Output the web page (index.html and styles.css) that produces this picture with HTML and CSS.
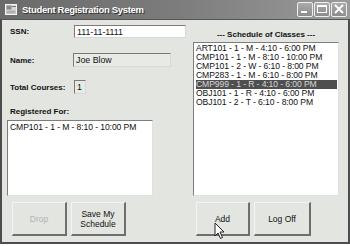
FILE: index.html
```html
<!DOCTYPE html>
<html>
<head>
<meta charset="utf-8">
<title>Student Registration System</title>
<link rel="stylesheet" href="styles.css">
</head>
<body>
<div class="window">
  <div class="titlebar">
    <svg class="appicon" width="12" height="11" viewBox="0 0 12 11">
      <rect x="0.5" y="0.5" width="11" height="10" fill="#d8d8d8" stroke="#f4f4f4"/>
      <rect x="1.5" y="1.5" width="5" height="4" fill="#8a8a8a"/>
      <rect x="7" y="2" width="4" height="1" fill="#777"/>
      <rect x="1.5" y="6.5" width="9" height="3" fill="#b0b0b0"/>
    </svg>
    <span class="title">Student Registration System</span>
    <div class="controls">
      <span class="ctl"><svg width="16" height="14" viewBox="0 0 16 14"><rect x="4" y="9" width="6" height="2" fill="#fff"/></svg></span>
      <span class="ctl"><svg width="16" height="14" viewBox="0 0 16 14"><rect x="3.5" y="3.5" width="9" height="7" fill="none" stroke="#fff"/><rect x="3.5" y="3" width="9" height="2" fill="#fff"/></svg></span>
      <span class="ctl"><svg width="16" height="14" viewBox="0 0 16 14"><path d="M4 3 L12 11 M12 3 L4 11" stroke="#fff" stroke-width="2"/></svg></span>
    </div>
  </div>

  <div class="client">
    <div class="col left">
      <div class="row ssn">
        <span class="lbl">SSN:</span>
        <span class="box wide">111-11-1111</span>
      </div>
      <div class="row name">
        <span class="lbl">Name:</span>
        <span class="box ro mid">Joe Blow</span>
      </div>
      <div class="row total">
        <span class="lbl">Total Courses:</span>
        <span class="box ro tiny">1</span>
      </div>
      <div class="lbl reg">Registered For:</div>
      <div class="list short">
        <div class="item">CMP101 - 1 - M - 8:10 - 10:00 PM</div>
      </div>
      <div class="buttons">
        <span class="btn off">Drop</span>
        <span class="btn">Save My<br>Schedule</span>
      </div>
    </div>

    <div class="col right">
      <div class="heading">--- Schedule of Classes ---</div>
      <div class="list tall">
        <div class="item">ART101 - 1 - M - 4:10 - 6:00 PM</div>
        <div class="item">CMP101 - 1 - M - 8:10 - 10:00 PM</div>
        <div class="item">CMP101 - 2 - W - 6:10 - 8:00 PM</div>
        <div class="item">CMP283 - 1 - M - 6:10 - 8:00 PM</div>
        <div class="item sel">CMP999 - 1 - R - 4:10 - 6:00 PM</div>
        <div class="item">OBJ101 - 1 - R - 4:10 - 6:00 PM</div>
        <div class="item">OBJ101 - 2 - T - 6:10 - 8:00 PM</div>
      </div>
      <div class="buttons">
        <span class="btn add">Add</span>
        <span class="btn logoff">Log Off</span>
      </div>
    </div>
  </div>

  <svg class="cursor" width="12" height="18" viewBox="0 0 12 18">
    <path d="M1 1 L1 14 L4 11 L6.5 16.5 L8.5 15.5 L6 10 L10 10 Z" fill="#fff" stroke="#222" stroke-width="1"/>
  </svg>
</div>
</body>
</html>
```

FILE: styles.css
```css
body {
    margin: 0;
    background: #fff;
    font-family: "Liberation Sans", Arial, sans-serif;
    color: #111;
}

.window {
    position: relative;
    width: 350px;
    height: 244px;
    box-sizing: border-box;
    background: #e3e5e1;
    border: 2px solid #4c4c4c;
    border-top: 0;
    display: flex;
    flex-direction: column;
}

.titlebar {
    height: 19px;
    margin: 0 -2px;
    background: linear-gradient(to right, #6a6a6a, #7c7c7c 50%, #9a9a9a);
    display: flex;
    align-items: center;
    padding: 0 3px 0 5px;
    border-bottom: 1px solid #555;
}

.appicon {
    margin-right: 5px;
}

.title {
    color: #fff;
    font-weight: bold;
    font-size: 9.5px;
    letter-spacing: -0.3px;
    text-shadow: 1px 1px 0 #333;
}

.controls {
    margin-left: auto;
    display: flex;
    gap: 1px;
}

.ctl {
    width: 16px;
    height: 15px;
    box-sizing: border-box;
    border: 1px solid #eee;
    border-radius: 2px;
    background: linear-gradient(#ababab, #8c8c8c);
    display: flex;
}

.ctl svg {
    margin: -1px;
}

.client {
    flex: 1;
    display: flex;
    gap: 7px;
    padding: 0 0 0 5px;
}

.col {
    display: flex;
    flex-direction: column;
}

.left {
    width: 179px;
}

.right {
    width: 146px;
}

.row {
    display: flex;
    align-items: center;
}

.lbl {
    font-weight: bold;
    font-size: 8px;
    width: 67px;
    box-sizing: border-box;
    padding-left: 3px;
    flex: none;
}

.box {
    box-sizing: border-box;
    background: #fff;
    border: 1px solid #7a7a7a;
    border-right-color: #d8d8d8;
    border-bottom-color: #d8d8d8;
    font-size: 8.8px;
    padding-left: 2px;
    display: flex;
    align-items: center;
}

.box.ro {
    background: #e8eae6;
}

.ssn {
    margin-top: 5px;
}

.wide {
    width: 112px;
    height: 13px;
}

.name {
    margin-top: 15px;
}

.mid {
    width: 98px;
    height: 14px;
    margin-left: -1px;
}

.total {
    margin-top: 13px;
}

.tiny {
    width: 12px;
    height: 14px;
}

.reg {
    margin-top: 13px;
    width: auto;
}

.list {
    box-sizing: border-box;
    background: #fff;
    border: 1px solid #7d7d7d;
    border-right-color: #e0e0e0;
    border-bottom-color: #e0e0e0;
    padding: 2px 0 0 2px;
}

.short {
    width: 146px;
    height: 76px;
    margin-top: 4px;
}

.tall {
    width: 146px;
    height: 154px;
    margin-top: 3px;
    padding-top: 1px;
}

.item {
    font-size: 8.6px;
    line-height: 9px;
    height: 9px;
    white-space: nowrap;
    letter-spacing: -0.1px;
}

.item.sel {
    background: #4f4f4f;
    color: #d8d8d8;
    margin-right: 1px;
}

.heading {
    margin-top: 10px;
    text-align: center;
    font-weight: bold;
    font-size: 8px;
    height: 9px;
}

.buttons {
    margin-top: auto;
    margin-bottom: 6px;
    display: flex;
    gap: 4px;
}

.left .buttons {
    margin-left: 5px;
}

.right .buttons {
    margin-left: 3px;
}

.btn {
    width: 55px;
    height: 34px;
    box-sizing: border-box;
    border: 1px solid #f4f4f4;
    border-right: 2px solid #6e6e6e;
    border-bottom: 2px solid #6e6e6e;
    background: #e3e5e1;
    font-size: 8.5px;
    text-align: center;
    display: flex;
    align-items: center;
    justify-content: center;
    line-height: 10px;
}

.btn.off {
    color: #b2b2b2;
}

.btn.add {
    width: 54px;
}

.btn.logoff {
    width: 57px;
}

.cursor {
    position: absolute;
    left: 212px;
    top: 222px;
}
```
